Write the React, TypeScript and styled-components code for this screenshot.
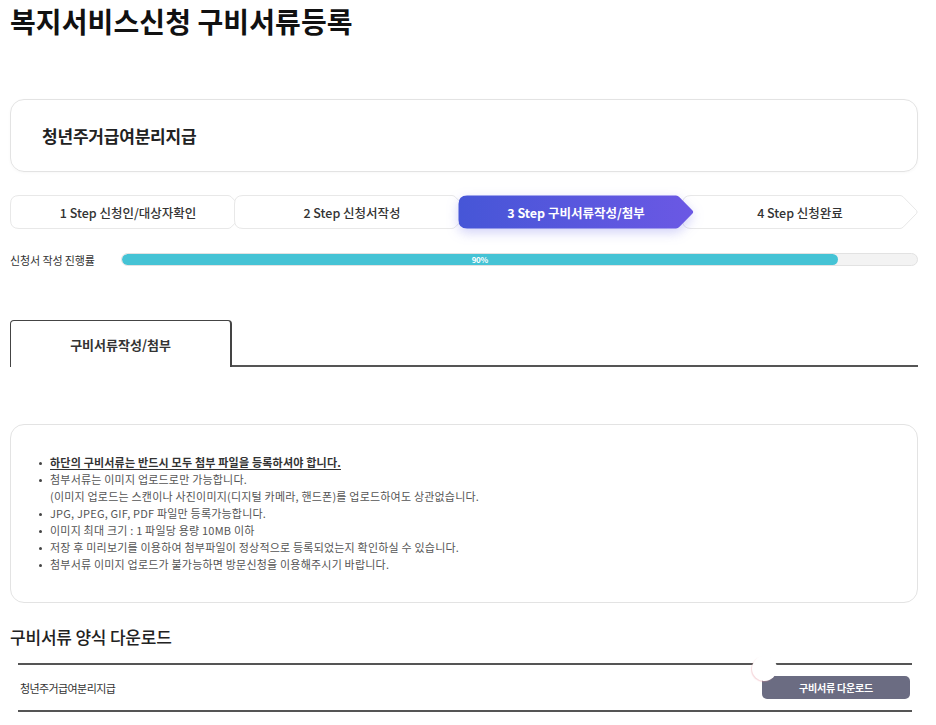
import React, { FC } from "react";
import styled, { createGlobalStyle } from "styled-components";

const GlobalStyle = createGlobalStyle`
  body {
    margin: 0;
    background: #ffffff;
    font-family: "Noto Sans CJK KR", "Noto Sans", sans-serif;
    color: #222;
  }
`;

const Page = styled.div`
  width: 908px;
  padding: 0 18px 40px 10px;
`;

const Title = styled.h1`
  margin: 0;
  padding-top: 2px;
  font-size: 28px;
  font-weight: 700;
  letter-spacing: 0.1px;
  line-height: 38px;
  color: #111;
`;

const ServiceCard = styled.div`
  margin-top: 59px;
  height: 73px;
  box-sizing: border-box;
  border: 1px solid #e3e3e3;
  border-radius: 14px;
  display: flex;
  align-items: center;
  padding-left: 31px;
  box-shadow: 0 1px 3px rgba(0, 0, 0, 0.03);
`;

const ServiceName = styled.div`
  font-size: 17px;
  font-weight: 700;
  letter-spacing: -0.2px;
  color: #222;
`;

const StepRow = styled.div`
  margin-top: 23px;
  display: flex;
`;

const StepItem = styled.div<{ $active?: boolean }>`
  position: relative;
  width: 236px;
  height: 34px;
  flex: none;
  display: flex;
  align-items: center;
  justify-content: center;
  z-index: ${(p) => (p.$active ? 2 : 1)};
  & + & {
    margin-left: -12px;
  }
  svg {
    position: absolute;
    inset: 0;
    overflow: visible;
    filter: ${(p) =>
      p.$active ? "drop-shadow(0 4px 6px rgba(90, 90, 230, 0.28))" : "none"};
  }
`;

const StepLabel = styled.span<{ $active?: boolean }>`
  position: relative;
  font-size: 12.5px;
  font-weight: ${(p) => (p.$active ? 700 : 500)};
  letter-spacing: 0;
  color: ${(p) => (p.$active ? "#ffffff" : "#333")};
`;

const ProgressRow = styled.div`
  margin-top: 24px;
  display: flex;
  align-items: center;
  height: 13px;
`;

const ProgressLabel = styled.div`
  width: 111px;
  flex: none;
  font-size: 11px;
  letter-spacing: -0.1px;
  color: #333;
`;

const ProgressTrack = styled.div`
  flex: 1;
  height: 13px;
  box-sizing: border-box;
  border: 1px solid #e2e2e2;
  background: #f3f3f3;
  border-radius: 7px;
  overflow: hidden;
`;

const ProgressFill = styled.div`
  height: 100%;
  background: #45c3d5;
  border-radius: 7px;
  display: flex;
  align-items: center;
  justify-content: center;
  font-size: 8px;
  font-weight: 700;
  color: #fff;
  letter-spacing: -0.3px;
`;

const TabBar = styled.div`
  margin-top: 54px;
  display: flex;
  align-items: flex-end;
`;

const Tab = styled.div`
  width: 222px;
  height: 47px;
  box-sizing: border-box;
  border: 1.5px solid #444;
  border-bottom: none;
  border-radius: 4px 4px 0 0;
  border-right-width: 2px;
  display: flex;
  align-items: center;
  justify-content: center;
  font-size: 13px;
  font-weight: 700;
  letter-spacing: 0;
  color: #333;
`;

const TabRest = styled.div`
  flex: 1;
  border-bottom: 2px solid #555;
`;

const NoticeBox = styled.div`
  margin-top: 57px;
  box-sizing: border-box;
  height: 179px;
  border: 1px solid #e3e3e3;
  border-radius: 14px;
  padding: 29px 0 0 27px;
`;

const NoticeList = styled.ul`
  margin: 0;
  padding: 0;
  list-style: none;
`;

const NoticeItem = styled.li<{ $strong?: boolean }>`
  position: relative;
  padding-left: 12px;
  font-size: 11px;
  line-height: 17px;
  letter-spacing: 0.2px;
  color: ${(p) => (p.$strong ? "#333" : "#555")};
  font-weight: ${(p) => (p.$strong ? 700 : 400)};
  text-decoration: ${(p) => (p.$strong ? "underline" : "none")};
  text-underline-offset: 2px;
  &::before {
    content: "";
    position: absolute;
    left: 1px;
    top: 8px;
    width: 3px;
    height: 3px;
    border-radius: 50%;
    background: #444;
  }
`;

const SectionTitle = styled.h2`
  margin: 21px 0 0;
  font-size: 17px;
  font-weight: 500;
  letter-spacing: -0.2px;
  line-height: 26px;
  color: #222;
`;

const FormTable = styled.div`
  position: relative;
  margin: 13px 6px 0 8px;
  border-top: 2px solid #555;
  border-bottom: 2px solid #555;
`;

const FormRow = styled.div`
  height: 45px;
  display: flex;
  align-items: center;
  justify-content: space-between;
  padding: 0 2px;
`;

const FormName = styled.div`
  font-size: 11px;
  letter-spacing: -0.6px;
  color: #333;
`;

const DownloadButton = styled.button`
  width: 148px;
  height: 23px;
  border: none;
  border-radius: 5px;
  background: #6b6c82;
  color: #fff;
  font-family: inherit;
  font-size: 10px;
  font-weight: 700;
  letter-spacing: -0.2px;
  cursor: pointer;
`;

const FloatingDot = styled.div`
  position: absolute;
  left: 734px;
  top: -9px;
  width: 25px;
  height: 25px;
  border-radius: 50%;
  background: #fff;
  box-shadow: -1px 1px 1px rgba(230, 150, 160, 0.35);
`;

interface StepProps {
  label: string;
  active?: boolean;
}

const Step: FC<StepProps> = ({ label, active }) => {
  const id = "stepGrad";
  return (
    <StepItem $active={active}>
      <svg width={236} height={34} viewBox="0 0 236 34">
        {active && (
          <defs>
            <linearGradient id={id} x1="0" y1="0" x2="1" y2="0">
              <stop offset="0" stopColor="#4656d7" />
              <stop offset="1" stopColor="#6b58e4" />
            </linearGradient>
          </defs>
        )}
        <path
          d="M9 0.5 H218 Q220 0.5 221.5 2.2 L234.5 15.5 Q235.8 17 234.5 18.5 L221.5 31.8 Q220 33.5 218 33.5 H9 Q0.5 33.5 0.5 25 V9 Q0.5 0.5 9 0.5 Z"
          fill={active ? `url(#${id})` : "#ffffff"}
          stroke={active ? "none" : "#e8e8e8"}
          strokeWidth={1}
        />
      </svg>
      <StepLabel $active={active}>{label}</StepLabel>
    </StepItem>
  );
};

export default function App() {
  return (
    <Page>
      <GlobalStyle />
      <Title>복지서비스신청 구비서류등록</Title>

      <ServiceCard>
        <ServiceName>청년주거급여분리지급</ServiceName>
      </ServiceCard>

      <StepRow>
        <Step label="1 Step 신청인/대상자확인" />
        <Step label="2 Step 신청서작성" />
        <Step label="3 Step 구비서류작성/첨부" active />
        <Step label="4 Step 신청완료" />
      </StepRow>

      <ProgressRow>
        <ProgressLabel>신청서 작성 진행률</ProgressLabel>
        <ProgressTrack>
          <ProgressFill style={{ width: "90%" }}>90%</ProgressFill>
        </ProgressTrack>
      </ProgressRow>

      <TabBar>
        <Tab>구비서류작성/첨부</Tab>
        <TabRest />
      </TabBar>

      <NoticeBox>
        <NoticeList>
          <NoticeItem $strong>
            하단의 구비서류는 반드시 모두 첨부 파일을 등록하셔야 합니다.
          </NoticeItem>
          <NoticeItem>
            첨부서류는 이미지 업로드로만 가능합니다.
            <br />
            (이미지 업로드는 스캔이나 사진이미지(디지털 카메라, 핸드폰)를 업로드하여도 상관없습니다.
          </NoticeItem>
          <NoticeItem>JPG, JPEG, GIF, PDF 파일만 등록가능합니다.</NoticeItem>
          <NoticeItem>이미지 최대 크기 : 1 파일당 용량 10MB 이하</NoticeItem>
          <NoticeItem>
            저장 후 미리보기를 이용하여 첨부파일이 정상적으로 등록되었는지 확인하실 수 있습니다.
          </NoticeItem>
          <NoticeItem>
            첨부서류 이미지 업로드가 불가능하면 방문신청을 이용해주시기 바랍니다.
          </NoticeItem>
        </NoticeList>
      </NoticeBox>

      <SectionTitle>구비서류 양식 다운로드</SectionTitle>
      <FormTable>
        <FormRow>
          <FormName>청년주거급여분리지급</FormName>
          <DownloadButton>구비서류 다운로드</DownloadButton>
        </FormRow>
        <FloatingDot />
      </FormTable>
    </Page>
  );
}
